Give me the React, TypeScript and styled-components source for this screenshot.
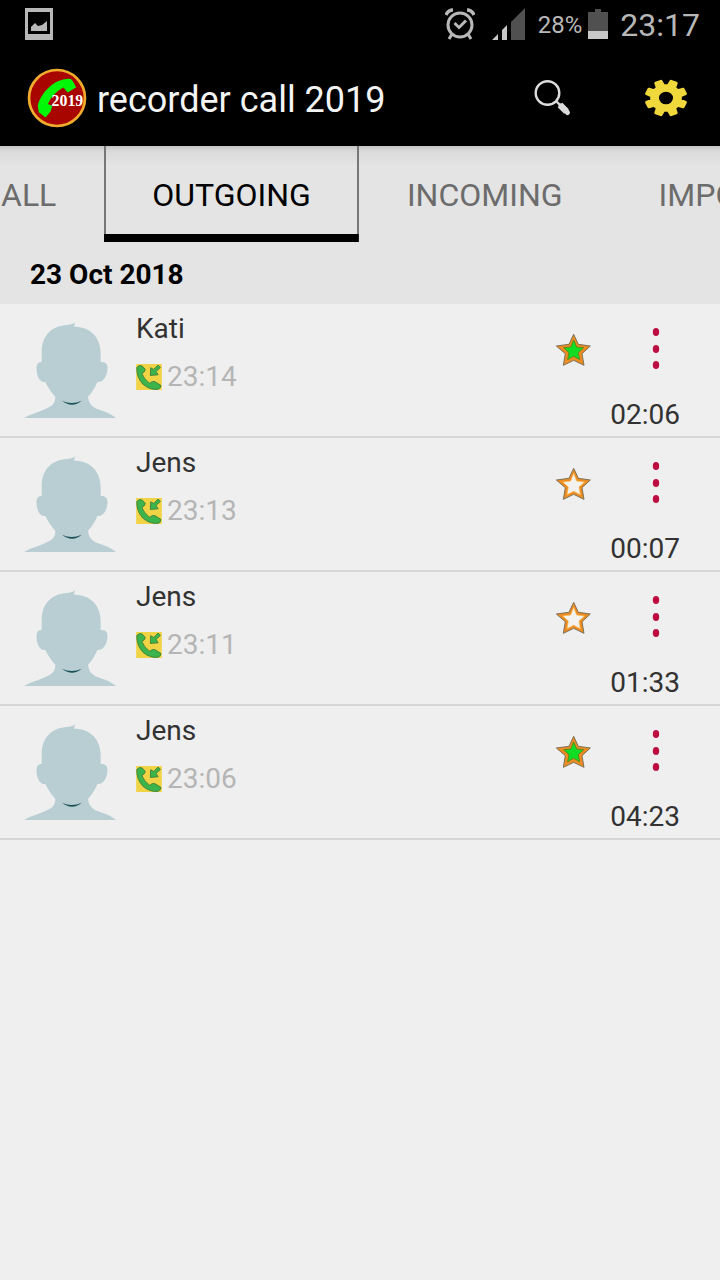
import React, { useState } from "react";
import styled, { createGlobalStyle } from "styled-components";

const GlobalStyle = createGlobalStyle`
  *, *::before, *::after { box-sizing: border-box; }
  body {
    margin: 0;
    background: #efefef;
    font-family: Roboto, "Noto Sans", sans-serif;
    color: #323232;
  }
  button {
    border: 0;
    padding: 0;
    background: none;
    font: inherit;
    color: inherit;
    cursor: pointer;
  }
  svg { display: block; }
`;

const Screen = styled.div`
  min-height: 100vh;
  overflow: hidden;
`;

const StatusBar = styled.div`
  display: flex;
  align-items: center;
  height: 48px;
  padding: 0 20px 0 25px;
  background: #000;
  color: #b8b8b8;
`;

const StatusGroup = styled.div`
  display: flex;
  align-items: center;
  margin-left: auto;
`;

const SignalSlot = styled.span`
  margin: 0 13px 0 17px;
`;

const Battery = styled.span`
  margin-right: 6px;
  padding-top: 2px;
  font-size: 24px;
  line-height: 32px;
`;

const Clock = styled.span`
  margin-left: 12px;
  padding-top: 2px;
  font-size: 32px;
  line-height: 40px;
`;

const AppBar = styled.header`
  display: flex;
  align-items: center;
  height: 98px;
  padding: 2px 32px 0 27px;
  background: #000;
  color: #f4f4f4;
`;

const Title = styled.h1`
  flex: 1;
  margin: 0 0 0 10px;
  padding-top: 4px;
  font-size: 36px;
  line-height: 48px;
  font-weight: 400;
  white-space: nowrap;
`;

const BarButton = styled.button`
  margin-left: 72px;
`;

const Tabs = styled.div`
  display: flex;
  height: 96px;
  overflow: hidden;
  background: linear-gradient(#c4c4c4 0, #dadada 5px, #e4e4e4 20px);
`;

const TabTrack = styled.div`
  display: flex;
  margin-left: -47px;
`;

const Tab = styled.button<{ $active: boolean }>`
  flex: none;
  padding: 2px 48px 0;
  font-size: 32px;
  line-height: 40px;
  white-space: nowrap;
  color: ${(p) => (p.$active ? "#000" : "#6c6c6c")};
  background: ${(p) =>
    p.$active
      ? `linear-gradient(#000, #000) bottom / 100% 8px no-repeat,
         linear-gradient(#777, #777) left / 2px 100% no-repeat,
         linear-gradient(#777, #777) right / 2px 100% no-repeat`
      : "none"};
`;

const DateHeading = styled.h2`
  margin: 0;
  padding: 17px 30px 13px;
  background: #e4e4e4;
  color: #000;
  font-size: 28px;
  line-height: 32px;
  font-weight: 700;
`;

const CallList = styled.ul`
  margin: 0;
  padding: 0;
  list-style: none;
`;

const CallRow = styled.li`
  display: flex;
  align-items: flex-start;
  padding: 8px 40px 4px 24px;
  border-bottom: 2px solid #d6d6d6;
`;

const AvatarSlot = styled.span`
  padding-top: 10px;
`;

const Details = styled.div`
  flex: 1;
  margin-left: 20px;
`;

const Name = styled.div`
  padding-top: 1px;
  font-size: 28px;
  line-height: 32px;
`;

const Meta = styled.div`
  display: flex;
  align-items: center;
  gap: 5px;
  margin-top: 16px;
  color: #b5b5b5;
  font-size: 28px;
  line-height: 32px;
`;

const Side = styled.div`
  display: flex;
  flex-direction: column;
  align-items: flex-end;
`;

const Actions = styled.div`
  display: flex;
  align-items: center;
  gap: 48px;
  height: 76px;
`;

const MoreButton = styled.button`
  padding: 0 20px 2px 13px;
`;

const Duration = styled.div`
  margin-top: 10px;
  font-size: 28px;
  line-height: 34px;
`;

const PictureIcon = () => (
  <svg width="28" height="32" viewBox="0 0 28 32" aria-hidden="true">
    <path fill="#b8b8b8" fillRule="evenodd" d="M0 0h28v32H0zM3 4v22h22V4z" />
    <path fill="#b8b8b8" d="M6 23v-4l4-4 3 3 4-1 5-4v10z" />
  </svg>
);

const AlarmIcon = () => (
  <svg width="30" height="32" viewBox="0 0 30 32" fill="none" stroke="#b8b8b8" aria-hidden="true">
    <circle cx="15" cy="17" r="12" strokeWidth="3" />
    <path strokeWidth="3.4" d="M1 7q2-5 7-5M29 7q-2-5-7-5" />
    <path strokeWidth="3" d="M7 26l-3 5M23 26l3 5M9.500 15l4.500 4.500 7-7" />
  </svg>
);

const SignalIcon = () => (
  <svg width="33" height="32" viewBox="0 0 33 32" aria-hidden="true">
    <path fill="#c8c8c8" d="M0 32l6-6v6zM10 22l5-5v15h-5z" />
    <path fill="#505050" d="M19 14L33 0v32H19z" />
  </svg>
);

const BatteryIcon = () => (
  <svg width="20" height="30" viewBox="0 0 20 30" aria-hidden="true">
    <path fill="#505050" d="M0 3h7V0h6v3h7v19H0z" />
    <path fill="#c8c8c8" d="M0 22h20v8H0z" />
  </svg>
);

const Logo = () => (
  <svg width="60" height="60" viewBox="82 205 178 178" aria-hidden="true">
    <circle cx="171" cy="294" r="83" fill="#a80400" stroke="#f0ac2c" strokeWidth="8" />
    <path
      fill="#00f808"
      d="M114 318C117 296 136 269 158 253Q178 239 205 237Q214 236 218 244L228 262L203 278L190 263Q158 280 144 312L157 318L152 334L137 352L117 336Z"
    />
    <text x="155" y="317" fill="#fff" fontFamily="Liberation Serif, serif" fontWeight="700" fontSize="47">
      2019
    </text>
  </svg>
);

const SearchIcon = () => (
  <svg width="38" height="38" viewBox="0 0 38 38" fill="none" stroke="#dcdcdc" aria-hidden="true">
    <circle cx="13.500" cy="14" r="11.800" strokeWidth="2.400" />
    <path strokeWidth="2.400" d="M22 22l5 5" />
    <path strokeWidth="6.500" d="M26 26l6.500 6.500" />
    <path strokeWidth="5" strokeLinecap="round" d="M27 27l6.500 6.500" />
  </svg>
);

const GEAR_TEETH = 8;

const gearPath = (() => {
  const points: string[] = [];
  for (let i = 0; i < GEAR_TEETH; i++) {
    const mid = ((i + 0.5) * 2 * Math.PI) / GEAR_TEETH;
    const corners: [number, number][] = [
      [-0.23, 14.5],
      [-0.14, 20],
      [0.14, 20],
      [0.23, 14.5],
    ];
    corners.forEach(([offset, radius]) => {
      const x = 22 + radius * Math.cos(mid + offset);
      const y = 19 + radius * 0.86 * Math.sin(mid + offset);
      points.push(`${x.toFixed(1)} ${y.toFixed(1)}`);
    });
  }
  return `M${points.join("L")}Z`;
})();

const GearIcon = () => (
  <svg width="44" height="38" viewBox="0 0 44 38" aria-hidden="true">
    <path fill="#f0d83c" stroke="#f0d83c" strokeWidth="3" strokeLinejoin="round" d={gearPath} />
    <ellipse cx="22" cy="19" rx="7" ry="6.300" fill="#000" />
  </svg>
);

const Avatar = () => (
  <svg width="92" height="96" viewBox="42 54 276 288" aria-hidden="true">
    <path
      fill="#b8ced3"
      d="M95 144C96 92 126 64 178 62Q190 60 196 55Q193 61 192 68C240 68 271 98 272 146L272 174C290 173 294 184 292 198C290 222 276 236 262 234C256 250 246 266 234 278C236 298 246 308 262 315C286 323 306 331 318 342L42 342C62 330 86 325 106 315C124 307 136 300 136 278C124 266 114 250 106 234C92 236 82 222 80 200C78 182 84 173 95 174Z"
    />
    <path fill="#1c5058" d="M156 290Q185 304 215 290Q187 314 156 290Z" />
  </svg>
);

const CallIcon = () => (
  <svg width="26" height="26" viewBox="378 174 76 77" aria-hidden="true">
    <path fill="#f0d446" d="M378 174h76v77h-76z" />
    <g fill="#3cb44c" stroke="#3c7a38" strokeWidth="2.500" strokeLinejoin="round">
      <path d="M380 184Q388 175 396 180L405 190Q405 197 395 202Q401 219 418 231Q425 224 433 226L451 237Q453 245 443 249Q420 252 398 234Q378 212 380 184Z" />
      <path d="M443 177L450 184L437 196L443 206L420 208L421 185L430 190Z" />
    </g>
  </svg>
);

const StarIcon = ({ filled }: { filled: boolean }) => (
  <svg width="35" height="34" viewBox="78 87 105 100" strokeLinejoin="round" aria-hidden="true">
    <path
      fill="#ee8c22"
      stroke="#7c7256"
      strokeWidth="3"
      d="M131 90L145 120L181 125L156 148L162 183L131 168L100 183L106 148L79 125L117 120Z"
    />
    {filled ? (
      <path
        fill="#10dc24"
        stroke="#5c8c1c"
        strokeWidth="3"
        d="M131 107L140 128L161 130L145 145L149 166L131 156L113 166L117 145L101 130L122 128Z"
      />
    ) : (
      <path
        fill="#f4f2ee"
        stroke="#f8b84c"
        strokeWidth="2"
        d="M131 105L140 128L164 131L147 146L151 169L131 159L111 169L115 146L98 131L122 128Z"
      />
    )}
  </svg>
);

const MoreIcon = () => (
  <svg width="8" height="42" viewBox="0 0 8 42" fill="#bc0c40" aria-hidden="true">
    <ellipse cx="4" cy="4" rx="3.200" ry="4" />
    <ellipse cx="4" cy="21" rx="3.200" ry="4" />
    <ellipse cx="4" cy="37" rx="3.200" ry="4" />
  </svg>
);

interface Call {
  name: string;
  time: string;
  duration: string;
  starred: boolean;
}

const initialCalls: Call[] = [
  { name: "Kati", time: "23:14", duration: "02:06", starred: true },
  { name: "Jens", time: "23:13", duration: "00:07", starred: false },
  { name: "Jens", time: "23:11", duration: "01:33", starred: false },
  { name: "Jens", time: "23:06", duration: "04:23", starred: true },
];

const tabs = ["ALL", "OUTGOING", "INCOMING", "IMPORTANT"];

export default function App() {
  const [active, setActive] = useState("OUTGOING");
  const [calls, setCalls] = useState(initialCalls);

  const toggleStar = (index: number) =>
    setCalls(calls.map((c, i) => (i === index ? { ...c, starred: !c.starred } : c)));

  return (
    <Screen>
      <GlobalStyle />
      <StatusBar>
        <PictureIcon />
        <StatusGroup>
          <AlarmIcon />
          <SignalSlot>
            <SignalIcon />
          </SignalSlot>
          <Battery>28%</Battery>
          <BatteryIcon />
          <Clock>23:17</Clock>
        </StatusGroup>
      </StatusBar>
      <AppBar>
        <Logo />
        <Title>recorder call 2019</Title>
        <BarButton aria-label="Search">
          <SearchIcon />
        </BarButton>
        <BarButton aria-label="Settings">
          <GearIcon />
        </BarButton>
      </AppBar>
      <Tabs>
        <TabTrack role="tablist">
          {tabs.map((tab) => (
            <Tab
              key={tab}
              role="tab"
              aria-selected={tab === active}
              $active={tab === active}
              onClick={() => setActive(tab)}
            >
              {tab}
            </Tab>
          ))}
        </TabTrack>
      </Tabs>
      <main>
        <DateHeading>23 Oct 2018</DateHeading>
        <CallList>
          {calls.map((call, i) => (
            <CallRow key={call.time}>
              <AvatarSlot>
                <Avatar />
              </AvatarSlot>
              <Details>
                <Name>{call.name}</Name>
                <Meta>
                  <CallIcon />
                  {call.time}
                </Meta>
              </Details>
              <Side>
                <Actions>
                  <button aria-label="Important" aria-pressed={call.starred} onClick={() => toggleStar(i)}>
                    <StarIcon filled={call.starred} />
                  </button>
                  <MoreButton aria-label="More options">
                    <MoreIcon />
                  </MoreButton>
                </Actions>
                <Duration>{call.duration}</Duration>
              </Side>
            </CallRow>
          ))}
        </CallList>
      </main>
    </Screen>
  );
}
